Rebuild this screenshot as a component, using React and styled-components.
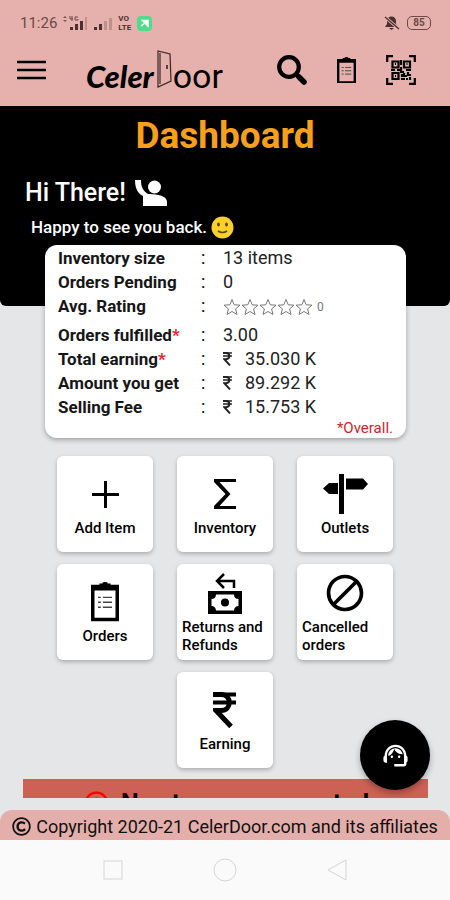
import React from 'react'
import styled, { createGlobalStyle } from 'styled-components'
import { MdSupportAgent, MdErrorOutline, MdBlock } from 'react-icons/md'
import { FaRegCopyright } from 'react-icons/fa'

const GlobalStyle = createGlobalStyle`
  * {
    box-sizing: border-box;
  }
  body {
    margin: 0;
    font-family: Roboto, "Liberation Sans", sans-serif;
    color: #000;
    background-color: #E5E6E8;
  }
  button {
    font: inherit;
    color: inherit;
    border: none;
    background: none;
    padding: 0;
    cursor: pointer;
  }
`
const Container = styled.div`
  position: relative;
  height: 100vh;
  display: flex;
  flex-direction: column;
  background-color: #E5E6E8;
`
const Header = styled.header`
  background-color: #E6B0AC;
  padding-bottom: 12px;
`
const StatusBar = styled.div`
  display: flex;
  align-items: center;
  justify-content: space-between;
  height: 46px;
  padding: 0 19px 0 20px;
  font-size: 15px;
  color: #6B4A48;
`
const StatusGroup = styled.div`
  display: flex;
  align-items: center;
  gap: 6px;
`
const Volte = styled.span`
  font-size: 8px;
  line-height: 9px;
  font-weight: 700;
  color: #4A302E;
`
const Battery = styled.span`
  border: 1px solid #6B4A48;
  border-radius: 5px;
  width: 24px;
  height: 14px;
  font-size: 10px;
  line-height: 12px;
  font-weight: 700;
  text-align: center;
`
const Toolbar = styled.nav`
  display: flex;
  align-items: center;
  height: 48px;
  padding: 0 34px 0 17px;
`
const IconButton = styled.button`
  display: flex;
  align-items: center;
  justify-content: center;
`
const Logo = styled.a`
  display: flex;
  align-items: baseline;
  margin-left: 40px;
  padding-top: 6px;
  color: #000;
  text-decoration: none;
  line-height: 40px;
`
const LogoScript = styled.span`
  margin-right: 2px;
  font-family: Lato, sans-serif;
  font-size: 31px;
  font-style: italic;
  font-weight: 900;
`
const LogoPlain = styled.span`
  font-size: 34px;
`
const Actions = styled.div`
  display: flex;
  align-items: center;
  gap: 30px;
  margin-left: auto;
`
const Main = styled.main`
  flex: 1;
  min-height: 0;
  overflow: hidden;
  margin-bottom: 12px;
`
const Hero = styled.section`
  height: 200px;
  padding: 8px 25px;
  color: #FFF;
  background-color: #000;
  border-radius: 0 0 6px 6px;
`
const Title = styled.h1`
  margin: 0;
  font-size: 37px;
  line-height: 44px;
  font-weight: 700;
  text-align: center;
  color: #F6A01C;
`
const Greeting = styled.h2`
  display: flex;
  align-items: center;
  gap: 8px;
  margin: 19px 0 0;
  font-size: 25px;
  line-height: 32px;
  font-weight: 500;
`
const SubGreeting = styled.p`
  display: flex;
  align-items: center;
  gap: 4px;
  margin: 6px 0 0;
  padding-left: 6px;
  font-size: 17px;
  line-height: 24px;
  font-weight: 500;
`
const Summary = styled.section`
  position: relative;
  margin: -61px 44px 0 45px;
  padding: 1px 13px 0;
  height: 193px;
  background-color: #FFF;
  border-radius: 12px;
  box-shadow: 0 2px 5px rgba(0, 0, 0, 0.3);
`
const Table = styled.table`
  border-collapse: collapse;
  font-size: 18px;
  line-height: 24px;
`
const Th = styled.th`
  width: 143px;
  padding: 0;
  font-size: 17px;
  font-weight: 700;
  text-align: left;
  color: #161616;
`
const Colon = styled.td`
  width: 22px;
  padding: 0;
`
const Td = styled.td`
  padding: 0;
  color: #222;
`
const Tr = styled.tr`
  height: ${props => props.$tall ? '29px' : '24px'};
  vertical-align: top;
`
const Asterisk = styled.span`
  color: #E8262A;
`
const Money = styled.span`
  display: flex;
  align-items: center;
  gap: 13px;
`
const Stars = styled.span`
  display: flex;
  align-items: center;
  height: 26px;
  font-size: 12px;
  color: #777;

  > span {
    margin-left: 4px;
  }
`
const Note = styled.p`
  margin: 0;
  font-size: 15px;
  line-height: 18px;
  text-align: right;
  color: #C62828;
`
const Tiles = styled.section`
  display: flex;
  flex-wrap: wrap;
  justify-content: center;
  gap: 12px 24px;
  max-width: 336px;
  margin: 18px auto 11px;
`
const Tile = styled.button`
  display: flex;
  flex-direction: column;
  align-items: center;
  justify-content: center;
  width: 96px;
  height: 96px;
  padding: 2px 5px 0;
  background-color: #FFF;
  border-radius: 6px;
  box-shadow: 0 2px 4px rgba(0, 0, 0, 0.25);
`
const TileIcon = styled.span`
  display: flex;
  align-items: center;
  justify-content: center;
  height: 42px;
`
const TileLabel = styled.span`
  padding-top: 4px;
  font-size: 15px;
  line-height: 18px;
  font-weight: 500;
  text-align: left;
`
const Banner = styled.div`
  display: flex;
  align-items: center;
  justify-content: center;
  gap: 10px;
  height: 48px;
  margin: 0 22px 0 23px;
  font-size: 25px;
  font-weight: 700;
  white-space: nowrap;
  background-color: #CD6155;

  > svg {
    color: #F00;
  }
`
const Support = styled.button`
  position: absolute;
  right: 20px;
  bottom: 110px;
  display: flex;
  align-items: center;
  justify-content: center;
  width: 70px;
  height: 70px;
  border-radius: 50%;
  box-shadow: 0 3px 6px rgba(0, 0, 0, 0.3);
  color: #FFF;
  background-color: #000;
`
const Footer = styled.footer`
  display: flex;
  align-items: center;
  justify-content: center;
  gap: 5px;
  height: 30px;
  padding-top: 2px;
  font-size: 18px;
  white-space: nowrap;
  color: #111;
  background-color: #E4AFAB;
  border-radius: 12px 12px 0 0;
`
const SystemNav = styled.nav`
  display: flex;
  align-items: center;
  justify-content: center;
  gap: 88px;
  height: 60px;
  background-color: #FAFAFA;
`

const SignalData = () => (
  <svg width="25" height="16" viewBox="0 0 25 16" fill="#4A302E">
    <path d="M2 1l2 2H0zM2 7L0 5h4z" opacity="0.7" />
    <path d="M7 1v3h3M9 1v5M15 2h-3v3h3V4" fill="none" stroke="#6B4A48" />
    <path d="M7 12h3v3H7zM12 9h3v6h-3zM17 6h3v9h-3z" />
    <path d="M22 2h2v13h-2z" opacity="0.25" />
  </svg>
)

const Signal = () => (
  <svg width="18" height="16" viewBox="0 0 18 16" fill="#4A302E">
    <path d="M0 12h3v3H0zM5 9h3v6H5z" />
    <path d="M10 6h3v9h-3zM15 3h3v12h-3z" opacity="0.25" />
  </svg>
)

const Arrow = () => (
  <svg width="15" height="15" viewBox="0 0 15 15">
    <rect width="15" height="15" rx="4" fill="#4FDC8C" />
    <path d="M4 10l4-3M5.500 4.500H11V10z" stroke="#FFF" strokeWidth="1.500" fill="#FFF" />
  </svg>
)

const Muted = () => (
  <svg width="18" height="14" viewBox="0 0 18 14">
    <path d="M2 11h13l-2-3V5a4.500 4.500 0 0 0-9 0v3zM6 12h5l-2.500 2z" fill="#4A302E" />
    <path d="M2 1l14 12" stroke="#E6B0AC" strokeWidth="3" />
    <path d="M2 1l14 12" stroke="#4A302E" strokeWidth="1.300" />
  </svg>
)

const MenuLines = () => (
  <svg width="29" height="20" viewBox="0 0 29 20" stroke="currentColor" strokeWidth="2.6">
    <path d="M0 2h29M0 10h29M0 18h29" />
  </svg>
)

const Door = () => (
  <svg width="17" height="38" viewBox="0 0 17 38" fill="none" stroke="#3A2523">
    <path d="M2 37V1l12 3 1 27zM4 34V3" strokeWidth="1.2" />
    <path d="M11 15v4" strokeWidth="1.6" />
  </svg>
)

const Magnifier = () => (
  <svg width="30" height="30" viewBox="0 0 30 30" fill="none" stroke="currentColor">
    <circle cx="12" cy="12" r="9.8" strokeWidth="4.2" />
    <path d="M19 19l3 3" strokeWidth="4" />
    <path d="M22 22l5 5" strokeWidth="5.500" strokeLinecap="round" />
  </svg>
)

const Clipboard = ({ width }) => (
  <svg width={width} height={width * 1.4} viewBox="0 0 20 28">
    <path d="M0 2h6V1h2a2 1 0 0 1 4 0h2v1h6v26H0zM2.500 6v19.500h15V6H15H5z" fillRule="evenodd" fill="currentColor" />
    <path d="M5 11h2M8.500 11H15M5 14.500h2M8.500 14.500H15M5 18h2M8.500 18H15" stroke="#444" />
  </svg>
)

const QrScan = () => (
  <svg width="30" height="30" viewBox="0 0 30 30" fill="none" stroke="currentColor" strokeWidth="2.200">
    <path d="M1.200 7V1.200H7M23 1.200h5.800V7M28.800 23v5.800H23M7 28.800H1.200V23" />
    <path d="M6.500 6.500h6v6h-6zM18 6.500h6v6h-6zM6.500 18h6v6h-6z" />
    <path d="M15 5v5M9 9h1M20.500 9h1M9 21h1M5 15h4M11 15h3M15 12v5h3M20 15h5M16 19v3M18 18v3h3M22 17v3h3M15 24h4M20 24h2M24 22v3" />
  </svg>
)

const RaisedHand = () => (
  <svg width="34" height="27" viewBox="0 0 34 27" fill="currentColor">
    <circle cx="20.500" cy="7" r="6.500" />
    <path d="M1 0h6c0 7 2 11 7 14 7 0 19 1 19 8v4H9V16C3 13 1 7 1 0z" />
  </svg>
)

const Smiley = () => (
  <svg width="23" height="23" viewBox="0 0 23 23">
    <circle cx="11.500" cy="11.500" r="11" fill="#F9D02C" />
    <ellipse cx="7.500" cy="8.500" rx="1.400" ry="2" fill="#5C4308" />
    <ellipse cx="15.500" cy="8.500" rx="1.400" ry="2" fill="#5C4308" />
    <path d="M7 15q4.500 3 9 0" stroke="#5C4308" strokeWidth="1.600" fill="none" />
  </svg>
)

const RatingStar = () => (
  <svg width="18" height="18" viewBox="0 0 18 18" fill="none" stroke="currentColor">
    <path d="M9 1.500l2.200 5.300 5.800.4-4.400 3.700 1.400 5.600L9 13.500l-5 3 1.400-5.600L1 7.200l5.800-.4z" />
  </svg>
)

const Rupee = ({ size }) => (
  <svg width={size * 0.64} height={size} viewBox="0 0 23 36" fill="none" stroke="currentColor">
    <path d="M0 2.500h23M0 10.500h23" strokeWidth="4" />
    <path d="M0 2.500h8c11 0 11 16 0 16H3l15 16" strokeWidth="5" />
  </svg>
)

const Plus = () => (
  <svg width="27" height="27" viewBox="0 0 27 27" stroke="currentColor" strokeWidth="3">
    <path d="M13.500 0v27M0 13.500h27" />
  </svg>
)

const Sigma = () => (
  <svg width="24" height="32" viewBox="0 0 24 32" fill="currentColor">
    <path d="M1 1h22v3H6.500L17.500 16 6.500 28H23v3H1v-3l11.500-12L1 4z" />
  </svg>
)

const Signpost = () => (
  <svg width="46" height="40" viewBox="0 0 46 40" fill="currentColor">
    <path d="M17 0h5v40h-5zM24 4.500h17l5 5.500-5 5.500H24zM16 9H7l-6 5.500L7 20h9z" />
  </svg>
)

const Refund = () => (
  <svg width="34" height="41" viewBox="0 0 34 41">
    <path d="M26 15V8H10M16 1L9 8l7 7" fill="none" stroke="currentColor" strokeWidth="2.500" />
    <path d="M0 18h34v23H0zM8 21.500c0 3-2 4.500-4.500 4.500v7c2.500 0 4.500 2 4.500 4.500h18c0-2.500 2-4.500 4.500-4.500v-7c-2.500 0-4.500-1.500-4.500-4.500z" fillRule="evenodd" fill="currentColor" />
    <circle cx="17" cy="29.500" r="4" fill="currentColor" />
  </svg>
)

const rows = [
  { label: 'Inventory size', value: '13 items' },
  { label: 'Orders Pending', value: '0' },
  { label: 'Avg. Rating', rating: '0' },
  { label: 'Orders fulfilled', value: '3.00', overall: true },
  { label: 'Total earning', value: '35.030 K', overall: true, money: true },
  { label: 'Amount you get', value: '89.292 K', money: true },
  { label: 'Selling Fee', value: '15.753 K', money: true },
]

const tiles = [
  { label: 'Add Item', icon: <Plus /> },
  { label: 'Inventory', icon: <Sigma /> },
  { label: 'Outlets', icon: <Signpost /> },
  { label: 'Orders', icon: <Clipboard width={28} /> },
  { label: 'Returns and Refunds', icon: <Refund /> },
  { label: 'Cancelled orders', icon: <MdBlock size={44} /> },
  { label: 'Earning', icon: <Rupee size={36} /> },
]

function App() {
  return (
    <Container>
      <GlobalStyle />
      <Header>
        <StatusBar>
          <StatusGroup>
            <span>11:26</span>
            <SignalData />
            <Signal />
            <Volte>VO<br />LTE</Volte>
            <Arrow />
          </StatusGroup>
          <StatusGroup>
            <Muted />
            <Battery>85</Battery>
          </StatusGroup>
        </StatusBar>
        <Toolbar>
          <IconButton aria-label="Menu"><MenuLines /></IconButton>
          <Logo href="#">
            <LogoScript>Celer</LogoScript>
            <Door />
            <LogoPlain>oor</LogoPlain>
          </Logo>
          <Actions>
            <IconButton aria-label="Search"><Magnifier /></IconButton>
            <IconButton aria-label="Orders"><Clipboard width={19} /></IconButton>
            <IconButton aria-label="Scan code"><QrScan /></IconButton>
          </Actions>
        </Toolbar>
      </Header>
      <Main>
        <Hero>
          <Title>Dashboard</Title>
          <Greeting>Hi There! <RaisedHand /></Greeting>
          <SubGreeting>Happy to see you back.<Smiley /></SubGreeting>
        </Hero>
        <Summary>
          <Table>
            <tbody>
              {rows.map(r => (
                <Tr key={r.label} $tall={r.rating}>
                  <Th scope="row">{r.label}{r.overall && <Asterisk>*</Asterisk>}</Th>
                  <Colon>:</Colon>
                  <Td>
                    {r.rating && <Stars>
                      {[1, 2, 3, 4, 5].map(n => <RatingStar key={n} />)}
                      <span>{r.rating}</span>
                    </Stars>}
                    {r.money ? <Money><Rupee size={14} />{r.value}</Money> : r.value}
                  </Td>
                </Tr>
              ))}
            </tbody>
          </Table>
          <Note>*Overall.</Note>
        </Summary>
        <Tiles>
          {tiles.map(t => (
            <Tile key={t.label}>
              <TileIcon>{t.icon}</TileIcon>
              <TileLabel>{t.label}</TileLabel>
            </Tile>
          ))}
        </Tiles>
        <Banner><MdErrorOutline size={29} />No store page created</Banner>
      </Main>
      <Footer><FaRegCopyright size={19} />Copyright 2020-21 CelerDoor.com and its affiliates</Footer>
      <SystemNav>
        <IconButton aria-label="Recent apps">
          <svg width="24" height="24" fill="none" stroke="#D5D5D5"><rect x="3" y="3" width="18" height="18" /></svg>
        </IconButton>
        <IconButton aria-label="Home">
          <svg width="24" height="24" fill="none" stroke="#D5D5D5"><circle cx="12" cy="12" r="11" /></svg>
        </IconButton>
        <IconButton aria-label="Back">
          <svg width="24" height="24" fill="none" stroke="#D5D5D5"><path d="M21 2v20L3 12z" /></svg>
        </IconButton>
      </SystemNav>
      <Support aria-label="Support"><MdSupportAgent size={29} /></Support>
    </Container>
  )
}

export default App
